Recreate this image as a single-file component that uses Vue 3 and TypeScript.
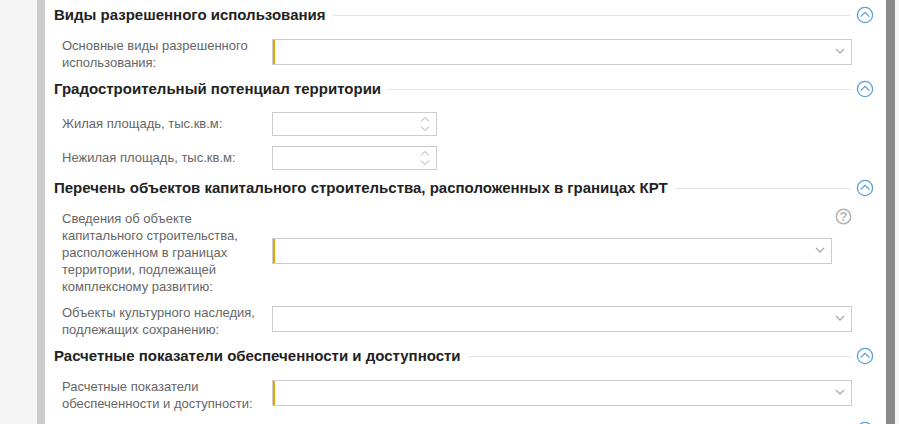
<script setup lang="ts">
interface Field {
  label: string;
  kind: "select" | "number";
  required?: boolean;
  help?: boolean;
}
interface Section {
  title: string;
  fields: Field[];
}

const sections: Section[] = [
  {
    title: "Виды разрешенного использования",
    fields: [{ label: "Основные виды разрешенного использования:", kind: "select", required: true }],
  },
  {
    title: "Градостроительный потенциал территории",
    fields: [
      { label: "Жилая площадь, тыс.кв.м:", kind: "number" },
      { label: "Нежилая площадь, тыс.кв.м:", kind: "number" },
    ],
  },
  {
    title: "Перечень объектов капитального строительства, расположенных в границах КРТ",
    fields: [
      {
        label: "Сведения об объекте капитального строительства, расположенном в границах территории, подлежащей комплексному развитию:",
        kind: "select",
        required: true,
        help: true,
      },
      { label: "Объекты культурного наследия, подлежащих сохранению:", kind: "select" },
    ],
  },
  {
    title: "Расчетные показатели обеспеченности и доступности",
    fields: [{ label: "Расчетные показатели обеспеченности и доступности:", kind: "select", required: true }],
  },
  { title: "", fields: [] },
];
</script>

<template>
  <div class="page">
    <div class="side"></div>
    <main class="card">
      <section v-for="(section, i) in sections" :key="i" class="section">
        <header class="head">
          <h2 v-if="section.title">{{ section.title }}</h2>
          <span v-if="section.title" class="rule"></span>
          <span v-else class="spacer"></span>
          <svg class="toggle" width="18" height="18" viewBox="0 0 18 18">
            <circle cx="9" cy="9" r="7.6" fill="none" stroke="#5a9fd6" stroke-width="1.3" />
            <path d="M4.6 10.600 9 6.400l4.400 4.200" fill="none" stroke="#5a9fd6" stroke-width="1.3" />
          </svg>
        </header>
        <div class="fields">
          <div v-for="field in section.fields" :key="field.label" class="row">
            <label class="label">{{ field.label }}</label>
            <div v-if="field.kind === 'number'" class="input number">
              <svg class="spin" width="10" height="18" viewBox="0 0 10 18">
                <path d="M1 6.500 5 2.500l4 4M1 11.500l4 4 4-4" fill="none" stroke="#aaa" stroke-width="1" />
              </svg>
            </div>
            <div v-else class="input select" :class="{ required: field.required, short: field.help }">
              <svg class="caret" width="10" height="7" viewBox="0 0 10 7">
                <path d="M1 1 5 5 9 1" fill="none" stroke="#aaa" stroke-width="1.300" />
              </svg>
            </div>
            <svg v-if="field.help" class="help" width="17" height="17" viewBox="0 0 17 17">
              <circle cx="8.500" cy="8.500" r="7.200" fill="none" stroke="#b5b5b5" stroke-width="1.600" />
              <text x="8.500" y="13" text-anchor="middle" class="help-mark">?</text>
            </svg>
          </div>
        </div>
      </section>
    </main>
    <div class="scroll"></div>
  </div>
</template>

<style scoped>
.page {
  display: flex;
  height: 424px;
  overflow: hidden;
  background: #f5f5f5;
  font-family: "Liberation Sans", Arial, sans-serif;
}
.side {
  width: 37px;
  flex: none;
}
.card {
  width: 841px;
  flex: none;
  box-sizing: content-box;
  border-left: 8px solid #ccc;
  background: #fff;
  padding-top: 3px;
}
.scroll {
  width: 9px;
  flex: none;
  background: #888;
}
.section {
  padding: 0 12px 0 9px;
}
.head {
  display: flex;
  align-items: center;
  height: 24px;
  margin-bottom: 11px;
}
h2 {
  margin: 0 0 2px;
  font-size: 15px;
  font-weight: 700;
  color: #222;
  white-space: nowrap;
}
.rule {
  flex: 1;
  height: 1px;
  margin: 0 5px 0 7px;
  background: #e5e5e5;
}
.spacer {
  flex: 1;
}
.toggle {
  flex: none;
}
.fields {
  display: flex;
  flex-direction: column;
  gap: 9px;
  padding-left: 8px;
  padding-right: 22px;
  margin-bottom: 5px;
}
.row {
  position: relative;
  display: flex;
  align-items: center;
}
.label {
  width: 210px;
  flex: none;
  font-size: 13px;
  line-height: 17px;
  color: #666;
  margin-top: -1px;
  padding-bottom: 1px;
}
.input {
  position: relative;
  box-sizing: border-box;
  height: 26px;
  margin-bottom: 6px;
  border: 1px solid #ccc;
  background: #fff;
}
.select {
  flex: 1;
}
.select.short {
  margin-right: 20px;
}
.select.required {
  box-shadow: inset 2px 0 0 #e8a200;
}
.number {
  width: 165px;
  height: 24px;
  margin-bottom: 1px;
}
.caret {
  position: absolute;
  right: 6px;
  top: 8px;
}
.spin {
  position: absolute;
  right: 6px;
  top: 2px;
}
.help {
  position: absolute;
  top: -3px;
  right: 0;
}
.help-mark {
  font-size: 13px;
  font-weight: 700;
  fill: #b5b5b5;
}
</style>

<style>
body {
  margin: 0;
}
</style>
